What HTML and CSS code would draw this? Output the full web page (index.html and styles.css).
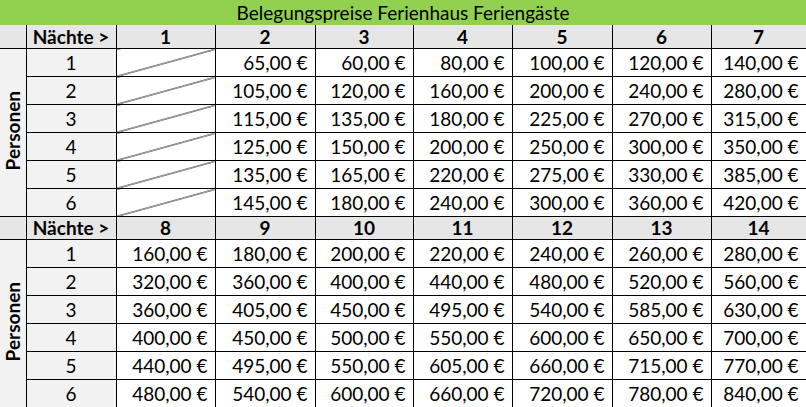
FILE: index.html
```html
<!DOCTYPE html>
<html lang="de">
<head>
<meta charset="utf-8">
<title>Belegungspreise Ferienhaus Feriengäste</title>
<link rel="stylesheet" href="styles.css">
</head>
<body>
<table class="prices">
  <colgroup>
    <col class="c-side"><col class="c-label"><col class="c-a"><col class="c-b"><col class="c-c"><col class="c-a"><col class="c-b"><col class="c-a"><col class="c-last">
  </colgroup>
  <tr class="title-row"><td colspan="9">Belegungspreise Ferienhaus Feriengäste</td></tr>
  <tr class="head-row">
    <th class="corner"></th><th>Nächte &gt;</th><th>1</th><th>2</th><th>3</th><th>4</th><th>5</th><th>6</th><th>7</th>
  </tr>
  <tr class="data-row">
    <th class="side" rowspan="6"><span>Personen</span></th>
    <td class="num">1</td><td class="empty"></td><td>65,00 €</td><td>60,00 €</td><td>80,00 €</td><td>100,00 €</td><td>120,00 €</td><td>140,00 €</td>
  </tr>
  <tr class="data-row"><td class="num">2</td><td class="empty"></td><td>105,00 €</td><td>120,00 €</td><td>160,00 €</td><td>200,00 €</td><td>240,00 €</td><td>280,00 €</td></tr>
  <tr class="data-row"><td class="num">3</td><td class="empty"></td><td>115,00 €</td><td>135,00 €</td><td>180,00 €</td><td>225,00 €</td><td>270,00 €</td><td>315,00 €</td></tr>
  <tr class="data-row"><td class="num">4</td><td class="empty"></td><td>125,00 €</td><td>150,00 €</td><td>200,00 €</td><td>250,00 €</td><td>300,00 €</td><td>350,00 €</td></tr>
  <tr class="data-row"><td class="num">5</td><td class="empty"></td><td>135,00 €</td><td>165,00 €</td><td>220,00 €</td><td>275,00 €</td><td>330,00 €</td><td>385,00 €</td></tr>
  <tr class="data-row"><td class="num">6</td><td class="empty"></td><td>145,00 €</td><td>180,00 €</td><td>240,00 €</td><td>300,00 €</td><td>360,00 €</td><td>420,00 €</td></tr>
  <tr class="head-row head-row-2">
    <th class="corner"></th><th>Nächte &gt;</th><th>8</th><th>9</th><th>10</th><th>11</th><th>12</th><th>13</th><th>14</th>
  </tr>
  <tr class="data-row">
    <th class="side" rowspan="6"><span>Personen</span></th>
    <td class="num">1</td><td>160,00 €</td><td>180,00 €</td><td>200,00 €</td><td>220,00 €</td><td>240,00 €</td><td>260,00 €</td><td>280,00 €</td>
  </tr>
  <tr class="data-row"><td class="num">2</td><td>320,00 €</td><td>360,00 €</td><td>400,00 €</td><td>440,00 €</td><td>480,00 €</td><td>520,00 €</td><td>560,00 €</td></tr>
  <tr class="data-row"><td class="num">3</td><td>360,00 €</td><td>405,00 €</td><td>450,00 €</td><td>495,00 €</td><td>540,00 €</td><td>585,00 €</td><td>630,00 €</td></tr>
  <tr class="data-row"><td class="num">4</td><td>400,00 €</td><td>450,00 €</td><td>500,00 €</td><td>550,00 €</td><td>600,00 €</td><td>650,00 €</td><td>700,00 €</td></tr>
  <tr class="data-row"><td class="num">5</td><td>440,00 €</td><td>495,00 €</td><td>550,00 €</td><td>605,00 €</td><td>660,00 €</td><td>715,00 €</td><td>770,00 €</td></tr>
  <tr class="data-row"><td class="num">6</td><td>480,00 €</td><td>540,00 €</td><td>600,00 €</td><td>660,00 €</td><td>720,00 €</td><td>780,00 €</td><td>840,00 €</td></tr>
</table>
</body>
</html>
```
FILE: styles.css
```css
html, body {
  margin: 0;
  padding: 0;
  background: #ffffff;
  overflow: hidden;
}

body {
  font-family: Lato, "Open Sans", sans-serif;
  font-size: 19px;
  color: #000000;
}

.prices {
  border-collapse: collapse;
  table-layout: fixed;
  width: 806px;
}

.c-side { width: 26px; }
.c-label { width: 90px; }
.c-a { width: 99px; }
.c-b { width: 100px; }
.c-c { width: 98px; }
.c-last { width: 95px; }

.prices td,
.prices th {
  padding: 0 7px 0 0;
  border: 1px solid #000000;
  text-align: right;
  white-space: nowrap;
  line-height: 20px;
  overflow: hidden;
}

.title-row td {
  background: #92d050;
  text-align: center;
  border: none;
  height: 25px;
  padding: 0;
  line-height: 24px;
}

.head-row th {
  background: #e7e6e6;
  text-align: center;
  font-weight: 700;
  padding: 0;
  height: 23px;
  border-top: none;
}

.head-row-2 th {
  height: 22px;
}

.head-row .corner {
  border-left: none;
  background: #e7e6e6;
}

.data-row td {
  height: 27px;
}

.data-row .num {
  background: #f2f2f2;
  text-align: center;
  padding: 0;
}

.side {
  background: #f2f2f2;
  border-left: none !important;
  padding: 0 !important;
  text-align: center !important;
  vertical-align: middle;
  font-weight: 700;
}

.side span {
  display: inline-block;
  writing-mode: vertical-rl;
  transform: rotate(180deg);
  line-height: 24px;
}

.empty {
  background: linear-gradient(to bottom right, transparent calc(50% - 0.8px), #000000 50%, transparent calc(50% + 0.8px));
}
```
